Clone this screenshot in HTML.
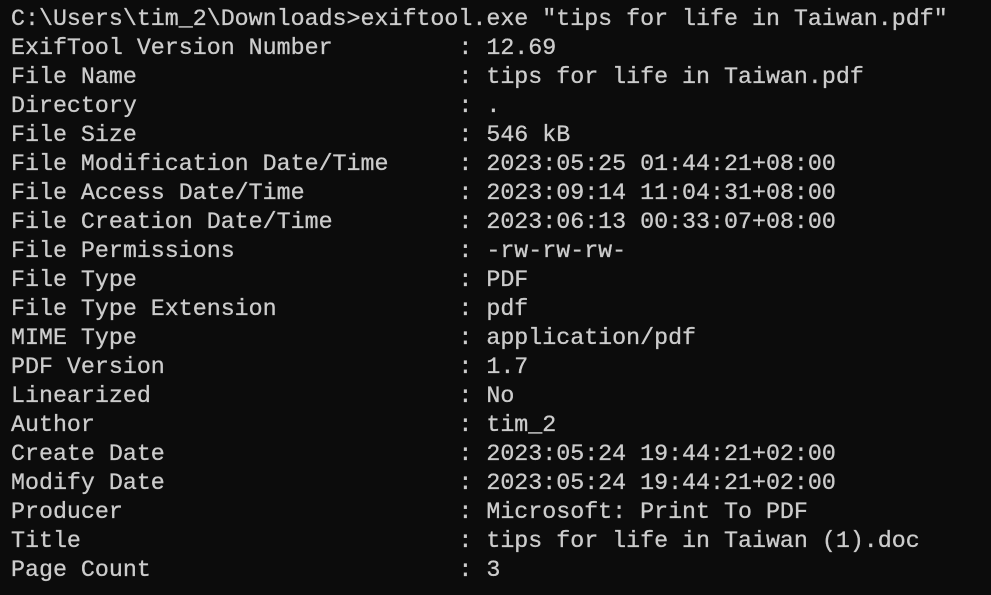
<!DOCTYPE html>
<html><head><meta charset="utf-8"><style>
html,body{margin:0;padding:0;background:#0c0c0c;width:991px;height:595px;overflow:hidden}
pre{margin:0;position:absolute;left:11px;top:5px;font-family:"Liberation Mono",monospace;font-size:23.3px;line-height:29px;color:#cccccc;-webkit-text-stroke:0.3px #cccccc}
</style></head><body><pre>C:\Users\tim_2\Downloads&gt;exiftool.exe "tips for life in Taiwan.pdf"
ExifTool Version Number         : 12.69
File Name                       : tips for life in Taiwan.pdf
Directory                       : .
File Size                       : 546 kB
File Modification Date/Time     : 2023:05:25 01:44:21+08:00
File Access Date/Time           : 2023:09:14 11:04:31+08:00
File Creation Date/Time         : 2023:06:13 00:33:07+08:00
File Permissions                : -rw-rw-rw-
File Type                       : PDF
File Type Extension             : pdf
MIME Type                       : application/pdf
PDF Version                     : 1.7
Linearized                      : No
Author                          : tim_2
Create Date                     : 2023:05:24 19:44:21+02:00
Modify Date                     : 2023:05:24 19:44:21+02:00
Producer                        : Microsoft: Print To PDF
Title                           : tips for life in Taiwan (1).doc
Page Count                      : 3</pre></body></html>
